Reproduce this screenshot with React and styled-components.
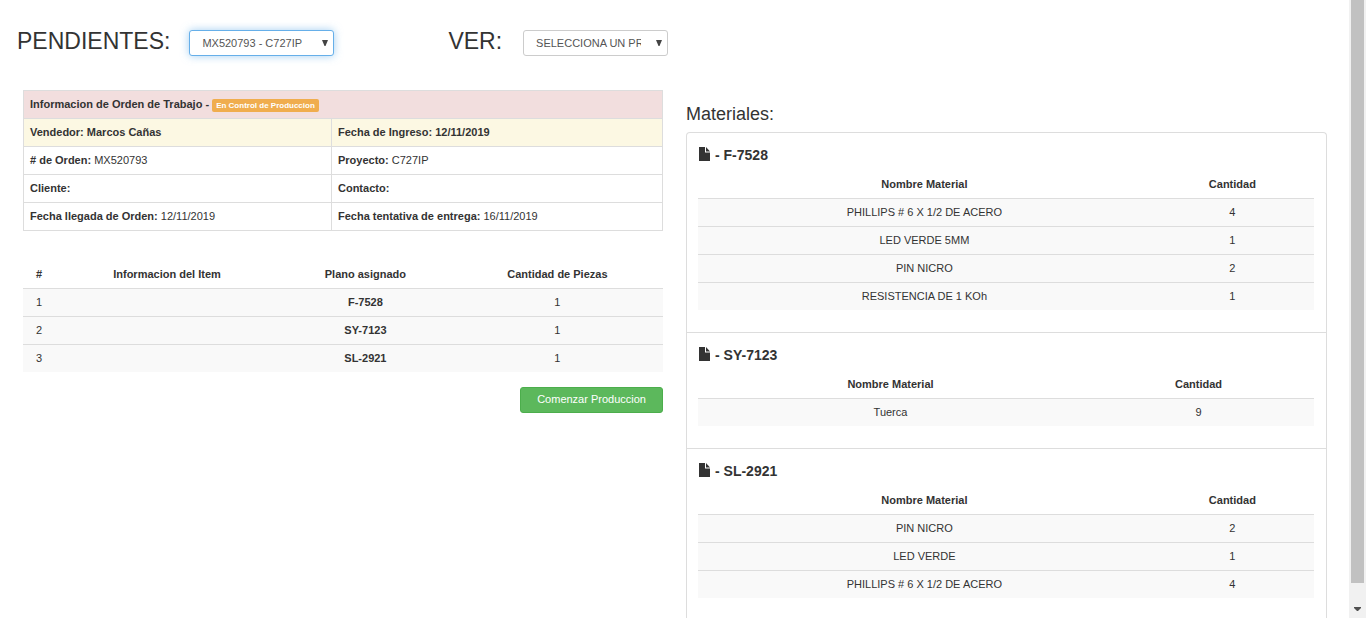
import React from "react";
import styled, { createGlobalStyle } from "styled-components";

const GlobalStyle = createGlobalStyle`
  * { box-sizing: border-box; }
  body {
    margin: 0;
    background: #fff;
    color: #333;
    font: 11px/17px "Liberation Sans", Arial, sans-serif;
  }
`;

const Shell = styled.div`
  display: grid;
  grid-template-columns: minmax(0, 1fr) 17px;
  height: 100vh;
  overflow: hidden;
`;

const Page = styled.main`
  min-height: 0;
  overflow: hidden;
`;

const Toolbar = styled.header`
  display: flex;
  align-items: center;
  padding: 28px 17px 0;
`;

const Field = styled.div`
  display: flex;
  align-items: flex-start;
  gap: ${(p) => p.$gap}px;
  margin-right: 114px;
`;

const FieldLabel = styled.label`
  font-size: 23px;
  line-height: 26px;
`;

const SelectBox = styled.div`
  position: relative;
  width: 145px;
`;

const Select = styled.select`
  appearance: none;
  display: block;
  width: 100%;
  height: 26px;
  margin: 2px 0 0;
  padding: 0 26px 0 12px;
  border: 1px solid ${(p) => (p.$active ? "#66afe9" : "#ccc")};
  border-radius: 3px;
  outline: none;
  background: #fff;
  box-shadow: ${(p) =>
    p.$active ? "0 0 8px rgba(102, 175, 233, 0.6)" : "none"};
  color: #555;
  font: inherit;
  text-overflow: clip;
`;

const Caret = styled.svg`
  position: absolute;
  top: 12px;
  right: 6px;
  width: 6px;
  height: 6px;
  fill: #444;
  pointer-events: none;
`;

const Columns = styled.div`
  display: grid;
  grid-template-columns: minmax(0, 640fr) minmax(0, 641fr);
  gap: 23px;
  align-items: start;
  padding: 34px 22px 0 23px;
`;

const OrderTable = styled.table`
  width: 100%;
  table-layout: fixed;
  border-collapse: collapse;
  margin-bottom: 29px;

  th, td {
    height: 28px;
    padding: 5px 6px;
    border: 1px solid #ddd;
    text-align: left;
  }
`;

const OrderRow = styled.tr`
  background: ${(p) => p.$tone || "transparent"};
`;

const Badge = styled.span`
  display: inline-block;
  padding: 2px 4px;
  border-radius: 2px;
  background: #f0ad4e;
  color: #fff;
  font-size: 8px;
  line-height: 9px;
  vertical-align: middle;
`;

const DataTable = styled.table`
  width: 100%;
  table-layout: fixed;
  border-collapse: collapse;

  th, td {
    height: 28px;
    padding: 5px;
    text-align: center;
  }

  thead th {
    padding: 6px 5px 4px;
  }

  tbody tr {
    border-top: 1px solid #ddd;
    background: #f9f9f9;
  }
`;

const Actions = styled.div`
  display: flex;
  justify-content: flex-end;
  padding-top: 15px;
`;

const PrimaryButton = styled.button`
  height: 26px;
  padding: 0 16px 2px;
  border: 1px solid #4cae4c;
  border-radius: 3px;
  background: #5cb85c;
  color: #fff;
  font: inherit;
  cursor: pointer;
`;

const Materials = styled.section`
  padding-top: 14px;
`;

const MaterialsTitle = styled.h2`
  margin: 0 0 8px;
  font-size: 18px;
  font-weight: normal;
  line-height: 20px;
`;

const Group = styled.article`
  padding: 12px 12px 22px 11px;
  border: 1px solid #ddd;
  border-bottom: 0;

  &:first-child { border-radius: 4px 4px 0 0; }
`;

const GroupTitle = styled.h3`
  display: flex;
  align-items: center;
  gap: 4px;
  margin: 0 0 5px;
  font-size: 14px;
  line-height: 20px;
`;

const FileIcon = styled.svg`
  width: 12px;
  height: 14px;
  margin: 0 0 2px 1px;
  fill: #333;
`;

const ScrollTrack = styled.div`
  display: flex;
  flex-direction: column;
  align-items: center;
  padding: 0 2px;
  background: #f1f1f1;
`;

const ScrollThumb = styled.div`
  flex: 1;
  width: 13px;
  background: #c1c1c1;
`;

const ScrollEnd = styled.div`
  display: flex;
  align-items: center;
  justify-content: center;
  height: 35px;
  padding-top: 17px;
`;

const orderRows = [
  [["# de Orden:", "MX520793"], ["Proyecto:", "C727IP"]],
  [["Cliente:", ""], ["Contacto:", ""]],
  [["Fecha llegada de Orden:", "12/11/2019"], ["Fecha tentativa de entrega:", "16/11/2019"]],
];

const items = [
  ["1", "F-7528", "1"],
  ["2", "SY-7123", "1"],
  ["3", "SL-2921", "1"],
];

const groups = [
  {
    plan: "F-7528",
    nameWidth: "73.5%",
    rows: [
      ["PHILLIPS # 6 X 1/2 DE ACERO", 4],
      ["LED VERDE 5MM", 1],
      ["PIN NICRO", 2],
      ["RESISTENCIA DE 1 KOh", 1],
    ],
  },
  { plan: "SY-7123", nameWidth: "62.5%", rows: [["Tuerca", 9]] },
  {
    plan: "SL-2921",
    nameWidth: "73.5%",
    rows: [
      ["PIN NICRO", 2],
      ["LED VERDE", 1],
      ["PHILLIPS # 6 X 1/2 DE ACERO", 4],
    ],
  },
];

function SelectField({ id, label, option, active, gap }) {
  return (
    <Field $gap={gap}>
      <FieldLabel htmlFor={id}>{label}</FieldLabel>
      <SelectBox>
        <Select id={id} $active={active}>
          <option>{option}</option>
        </Select>
        <Caret viewBox="0 0 6 6" aria-hidden="true">
          <path d="M0 0h6L3.5 6h-1z" />
        </Caret>
      </SelectBox>
    </Field>
  );
}

function MaterialGroup({ plan, nameWidth, rows }) {
  return (
    <Group>
      <GroupTitle>
        <FileIcon viewBox="0 0 12 14" aria-hidden="true">
          <path d="M0 0h6v5.5h5V14H0z" />
          <path d="M7 0v4.5h4z" />
        </FileIcon>
        - {plan}
      </GroupTitle>
      <DataTable>
        <colgroup>
          <col width={nameWidth} />
          <col />
        </colgroup>
        <thead>
          <tr>
            <th>Nombre Material</th>
            <th>Cantidad</th>
          </tr>
        </thead>
        <tbody>
          {rows.map(([name, count]) => (
            <tr key={name}>
              <td>{name}</td>
              <td>{count}</td>
            </tr>
          ))}
        </tbody>
      </DataTable>
    </Group>
  );
}

export default function App() {
  return (
    <Shell>
      <GlobalStyle />
      <Page>
        <Toolbar>
          <SelectField id="pendientes" label="PENDIENTES:" option="MX520793 - C727IP" active gap={19} />
          <SelectField id="ver" label="VER:" option="SELECCIONA UN PROYECTO" gap={21} />
        </Toolbar>
        <Columns>
          <section>
            <OrderTable>
              <colgroup>
                <col width="48.2%" />
                <col />
              </colgroup>
              <tbody>
                <OrderRow $tone="#f2dede">
                  <th colSpan={2}>
                    Informacion de Orden de Trabajo - <Badge>En Control de Produccion</Badge>
                  </th>
                </OrderRow>
                <OrderRow $tone="#fcf8e3">
                  <th>Vendedor: Marcos Cañas</th>
                  <th>Fecha de Ingreso: 12/11/2019</th>
                </OrderRow>
                {orderRows.map((row) => (
                  <OrderRow key={row[0][0]}>
                    {row.map(([label, value]) => (
                      <td key={label}>
                        <strong>{label}</strong> {value}
                      </td>
                    ))}
                  </OrderRow>
                ))}
              </tbody>
            </OrderTable>
            <DataTable>
              <colgroup>
                <col width="5%" />
                <col width="35%" />
                <col width="27%" />
                <col />
              </colgroup>
              <thead>
                <tr>
                  <th>#</th>
                  <th>Informacion del Item</th>
                  <th>Plano asignado</th>
                  <th>Cantidad de Piezas</th>
                </tr>
              </thead>
              <tbody>
                {items.map(([n, plan, count]) => (
                  <tr key={n}>
                    <td>{n}</td>
                    <td />
                    <th>{plan}</th>
                    <td>{count}</td>
                  </tr>
                ))}
              </tbody>
            </DataTable>
            <Actions>
              <PrimaryButton type="button">Comenzar Produccion</PrimaryButton>
            </Actions>
          </section>
          <Materials>
            <MaterialsTitle>Materiales:</MaterialsTitle>
            <div>
              {groups.map((g) => (
                <MaterialGroup key={g.plan} {...g} />
              ))}
            </div>
          </Materials>
        </Columns>
      </Page>
      <ScrollTrack aria-hidden="true">
        <ScrollThumb />
        <ScrollEnd>
          <svg width="7" height="4" viewBox="0 0 7 4" fill="#505050">
            <path d="M0 0h7v1L4 4H3L0 1z" />
          </svg>
        </ScrollEnd>
      </ScrollTrack>
    </Shell>
  );
}
